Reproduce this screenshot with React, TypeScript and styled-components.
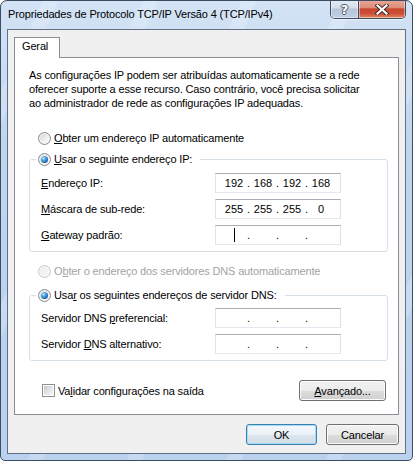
import React from 'react';
import styled, { createGlobalStyle } from 'styled-components';

const GlobalStyle = createGlobalStyle`
  html, body { margin: 0; padding: 0; background: #ffffff; }
  body {
    font-family: "Liberation Sans", Arial, sans-serif;
    font-size: 11px;
    letter-spacing: -0.15px;
    color: #000;
  }
  * { box-sizing: border-box; }
`;

const Window = styled.div`
  width: 413px;
  height: 461px;
  border: 1px solid #3b4c63;
  border-radius: 7px 7px 5px 5px;
  padding: 0 6px 6px 6px;
  display: flex;
  flex-direction: column;
  overflow: hidden;
  background:
    repeating-linear-gradient(115deg, rgba(255,255,255,0) 0 38px, rgba(255,255,255,0.18) 38px 52px, rgba(255,255,255,0) 52px 90px),
    linear-gradient(180deg, #d3e3f5 0%, #c0d6ef 30%, #b9d1ed 100%);
`;

const TitleBar = styled.div`
  height: 28px;
  display: flex;
  align-items: flex-start;
`;

const TitleText = styled.div`
  margin: 6px 0 0 1px;
  line-height: 14px;
  white-space: nowrap;
`;

const CaptionGroup = styled.div`
  margin: -1px 0 0 auto;
  display: flex;
  height: 19px;
  border: 1px solid #3b4c63;
  border-top: none;
  border-radius: 0 0 5px 5px;
  overflow: hidden;
  box-shadow: 0 1px 0 rgba(255,255,255,0.6);
`;

const CaptionButton = styled.div<{ $close?: boolean }>`
  width: ${p => (p.$close ? 47 : 27)}px;
  display: flex;
  align-items: center;
  justify-content: center;
  box-shadow: inset 0 0 0 1px rgba(255,255,255,0.45);
  background: ${p =>
    p.$close
      ? 'linear-gradient(180deg, #e9a999 0%, #dd8c79 42%, #c8452e 50%, #cc4f36 75%, #e38a62 100%)'
      : 'linear-gradient(180deg, #e4ebf4 0%, #d4deeb 45%, #b6c5d9 50%, #c2d0e3 100%)'};
  & + & { border-left: 1px solid #3b4c63; }
`;

const HelpGlyph = styled.span`
  font-family: "DejaVu Sans", sans-serif;
  font-weight: bold;
  font-size: 13px;
  line-height: 13px;
  color: #ffffff;
  letter-spacing: 0;
  text-shadow: -1px 0 #4a5669, 1px 0 #4a5669, 0 -1px #4a5669, 0 1px #4a5669;
`;

const Client = styled.div`
  flex: 1;
  border: 1px solid #5f7087;
  background: #f0f0f0;
  padding: 7px 6px 8px 6px;
  display: flex;
  flex-direction: column;
`;

const TabStrip = styled.div`
  display: flex;
`;

const Tab = styled.div`
  width: 46px;
  height: 21px;
  margin-bottom: -1px;
  padding: 1px 0 0 7px;
  line-height: 14px;
  border: 1px solid #898c95;
  border-bottom: none;
  background: #ffffff;
  position: relative;
  z-index: 1;
`;

const Panel = styled.div`
  flex: 1;
  border: 1px solid #898c95;
  background: #ffffff;
  display: flex;
  flex-direction: column;
`;

const Intro = styled.p`
  margin: 10px 0 0 14px;
  line-height: 14px;
`;

const OptionRow = styled.div<{ $top: number }>`
  margin: ${p => p.$top}px 0 0 23px;
`;

const Option = styled.label<{ $disabled?: boolean }>`
  display: flex;
  align-items: center;
  gap: 3px;
  height: 16px;
  line-height: 14px;
  white-space: nowrap;
  color: ${p => (p.$disabled ? '#a3a3a3' : '#000')};
`;

const Radio = styled.span<{ $checked?: boolean; $disabled?: boolean }>`
  width: 13px;
  height: 13px;
  border-radius: 50%;
  flex: none;
  display: flex;
  align-items: center;
  justify-content: center;
  border: 1px solid ${p => (p.$disabled ? '#c9c9c9' : '#8a8a8a')};
  background: ${p =>
    p.$disabled
      ? 'linear-gradient(135deg, #ececec, #f9f9f9)'
      : 'linear-gradient(135deg, #d3d3d3 0%, #eeeeee 55%, #ffffff 100%)'};
  box-shadow: inset 0 0 0 1px ${p => (p.$disabled ? '#f6f6f6' : '#f4f4f4')};
  &::after {
    content: '';
    display: ${p => (p.$checked ? 'block' : 'none')};
    width: 7px;
    height: 7px;
    border-radius: 50%;
    background: radial-gradient(circle at 35% 30%, #b8e6ff 0%, #4aa3e2 35%, #1a5c98 75%, #0d3560 100%);
  }
`;

const Checkbox = styled.span`
  width: 13px;
  height: 13px;
  flex: none;
  border: 1px solid #8e8f8f;
  padding: 1px;
  background: #ffffff;
  &::after {
    content: '';
    display: block;
    width: 100%;
    height: 100%;
    background: linear-gradient(135deg, #c6cacf 0%, #e4e6e9 55%, #f6f6f6 100%);
  }
`;

const Accel = styled.u`
  text-decoration: underline;
  text-underline-offset: 1px;
`;

const Group = styled.fieldset<{ $top: number; $inner: number }>`
  margin: ${p => p.$top}px 10px 0 14px;
  padding: ${p => p.$inner}px 0 6px 0;
  border: 1px solid #d5dfe5;
  border-radius: 3px;
  min-width: 0;
`;

const GroupLegend = styled.legend`
  margin-left: 6px;
  padding: 0 8px 0 2px;
`;

const FieldRow = styled.div`
  display: flex;
  align-items: center;
  height: 20px;
  padding-left: 11px;
  & + & { margin-top: 6px; }
`;

const FieldLabel = styled.span`
  width: 174px;
  line-height: 14px;
  white-space: nowrap;
`;

const IpBox = styled.div`
  width: 126px;
  height: 20px;
  display: flex;
  align-items: center;
  padding-left: 6px;
  border: 1px solid;
  border-color: #abadb3 #dbdfe6 #e3e9ef #e2e3ea;
  background: #ffffff;
  line-height: 18px;
  letter-spacing: 0;
`;

const Octet = styled.span`
  width: 24px;
  text-align: center;
  display: flex;
  justify-content: center;
`;

const Dot = styled.span`
  width: 5px;
  text-align: center;
`;

const Caret = styled.span`
  width: 1px;
  height: 14px;
  background: #000;
`;

const Footer = styled.div`
  margin: 19px 12px 0 27px;
  display: flex;
  align-items: center;
  justify-content: space-between;
`;

const PushButton = styled.button<{ $default?: boolean; $width: number }>`
  width: ${p => p.$width}px;
  height: 21px;
  padding: 0;
  font: inherit;
  letter-spacing: inherit;
  color: #000;
  border-radius: 3px;
  border: 1px solid ${p => (p.$default ? '#3c7fb1' : '#707070')};
  box-shadow: inset 0 0 0 1px ${p => (p.$default ? '#a3dcf7' : '#fbfbfb')};
  background: ${p =>
    p.$default
      ? 'linear-gradient(180deg, #f3f8fb 0%, #eaf1f6 50%, #dde6ed 51%, #d2dde6 100%)'
      : 'linear-gradient(180deg, #f2f2f2 0%, #ebebeb 50%, #dddddd 51%, #cfcfcf 100%)'};
`;

const DialogButtons = styled.div`
  margin-top: 9px;
  display: flex;
  justify-content: flex-end;
  gap: 9px;
`;

const CloseIcon = () => (
  <svg width="14" height="11" viewBox="0 0 14 11">
    <path d="M2.5 1.5 L11.5 9.5 M11.5 1.5 L2.5 9.5" stroke="#3d2a2a" strokeWidth="4" strokeLinecap="square" />
    <path d="M2.5 1.5 L11.5 9.5 M11.5 1.5 L2.5 9.5" stroke="#ffffff" strokeWidth="2.2" strokeLinecap="square" />
  </svg>
);

const IpField = ({ values, caret }: { values?: string[]; caret?: boolean }) => {
  const cells = values ?? ['', '', '', ''];
  return (
    <IpBox>
      {cells.map((v, i) => (
        <React.Fragment key={i}>
          {i > 0 && <Dot>.</Dot>}
          <Octet>{caret && i === 0 ? <Caret /> : v}</Octet>
        </React.Fragment>
      ))}
    </IpBox>
  );
};

export default function App() {
  return (
    <>
      <GlobalStyle />
      <Window>
        <TitleBar>
          <TitleText>Propriedades de Protocolo TCP/IP Versão 4 (TCP/IPv4)</TitleText>
          <CaptionGroup>
            <CaptionButton><HelpGlyph>?</HelpGlyph></CaptionButton>
            <CaptionButton $close><CloseIcon /></CaptionButton>
          </CaptionGroup>
        </TitleBar>
        <Client>
          <TabStrip>
            <Tab>Geral</Tab>
          </TabStrip>
          <Panel>
            <Intro>
              As configurações IP podem ser atribuídas automaticamente se a rede<br />
              oferecer suporte a esse recurso. Caso contrário, você precisa solicitar<br />
              ao administrador de rede as configurações IP adequadas.
            </Intro>

            <OptionRow $top={20}>
              <Option><Radio /><span><Accel>O</Accel>bter um endereço IP automaticamente</span></Option>
            </OptionRow>

            <Group $top={5} $inner={6}>
              <GroupLegend>
                <Option><Radio $checked /><span><Accel>U</Accel>sar o seguinte endereço IP:</span></Option>
              </GroupLegend>
              <FieldRow>
                <FieldLabel><Accel>E</Accel>ndereço IP:</FieldLabel>
                <IpField values={['192', '168', '192', '168']} />
              </FieldRow>
              <FieldRow>
                <FieldLabel><Accel>M</Accel>áscara de sub-rede:</FieldLabel>
                <IpField values={['255', '255', '255', '0']} />
              </FieldRow>
              <FieldRow>
                <FieldLabel><Accel>G</Accel>ateway padrão:</FieldLabel>
                <IpField caret />
              </FieldRow>
            </Group>

            <OptionRow $top={11}>
              <Option $disabled><Radio $disabled /><span>O<Accel>b</Accel>ter o endereço dos servidores DNS automaticamente</span></Option>
            </OptionRow>

            <Group $top={8} $inner={5}>
              <GroupLegend>
                <Option><Radio $checked /><span>Usa<Accel>r</Accel> os seguintes endereços de servidor DNS:</span></Option>
              </GroupLegend>
              <FieldRow>
                <FieldLabel>Servidor DNS <Accel>p</Accel>referencial:</FieldLabel>
                <IpField />
              </FieldRow>
              <FieldRow>
                <FieldLabel>Servidor <Accel>D</Accel>NS alternativo:</FieldLabel>
                <IpField />
              </FieldRow>
            </Group>

            <Footer>
              <Option><Checkbox /><span>Va<Accel>l</Accel>idar configurações na saída</span></Option>
              <PushButton $width={87}><Accel>A</Accel>vançado...</PushButton>
            </Footer>
          </Panel>
          <DialogButtons>
            <PushButton $default $width={71}>OK</PushButton>
            <PushButton $width={73}>Cancelar</PushButton>
          </DialogButtons>
        </Client>
      </Window>
    </>
  );
}
